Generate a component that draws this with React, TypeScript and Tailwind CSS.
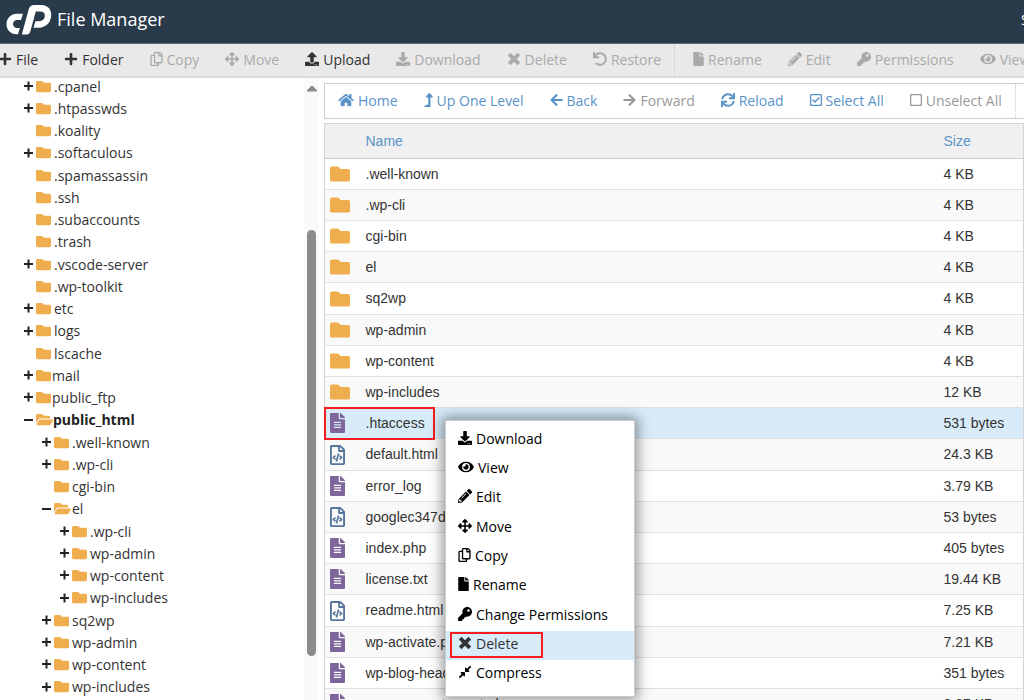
import type { ReactNode } from "react";
import {
  FaArrowLeft,
  FaArrowRight,
  FaArrowsAlt,
  FaCaretUp,
  FaCompressAlt,
  FaDownload,
  FaEye,
  FaFile,
  FaFileAlt,
  FaFolder,
  FaFolderOpen,
  FaHome,
  FaKey,
  FaLevelUpAlt,
  FaPencilAlt,
  FaPlus,
  FaRegCheckSquare,
  FaRegCopy,
  FaRegFileCode,
  FaRegSquare,
  FaSync,
  FaUndo,
  FaUpload,
} from "react-icons/fa";

type Icon = (props: { className?: string }) => ReactNode;
// w: icon width, only for glyphs that are not square
type Action = { label: string; icon: Icon; w?: string; off?: boolean; sep?: boolean };

function Cross({ className }: { className?: string }) {
  return (
    <svg viewBox="0 0 14 14" className={className} stroke="currentColor" strokeWidth="3.8">
      <path d="M2.200 2.200L11.800 11.800M11.800 2.200L2.200 11.800" />
    </svg>
  );
}

const toolbar: Action[] = [
  { label: "File", icon: FaPlus },
  { label: "Folder", icon: FaPlus },
  { label: "Copy", icon: FaRegCopy, w: "w-[13px]", off: true },
  { label: "Move", icon: FaArrowsAlt, off: true },
  { label: "Upload", icon: FaUpload },
  { label: "Download", icon: FaDownload, off: true },
  { label: "Delete", icon: Cross, off: true },
  { label: "Restore", icon: FaUndo, off: true, sep: true },
  { label: "Rename", icon: FaFile, w: "w-[11px]", off: true },
  { label: "Edit", icon: FaPencilAlt, off: true },
  { label: "Permissions", icon: FaKey, off: true },
  { label: "View", icon: FaEye, w: "w-4", off: true },
];

const navActions: Action[] = [
  { label: "Home", icon: FaHome, w: "w-4" },
  { label: "Up One Level", icon: FaLevelUpAlt, w: "w-[9px]" },
  { label: "Back", icon: FaArrowLeft, w: "w-[13px]" },
  { label: "Forward", icon: FaArrowRight, w: "w-[13px]", off: true },
  { label: "Reload", icon: FaSync },
  { label: "Select All", icon: FaRegCheckSquare, w: "w-3" },
  { label: "Unselect All", icon: FaRegSquare, w: "w-3", off: true, sep: true },
];

const menu: Action[] = [
  { label: "Download", icon: FaDownload },
  { label: "View", icon: FaEye, w: "w-4" },
  { label: "Edit", icon: FaPencilAlt },
  { label: "Move", icon: FaArrowsAlt },
  { label: "Copy", icon: FaRegCopy, w: "w-[13px]" },
  { label: "Rename", icon: FaFile, w: "w-[11px]" },
  { label: "Change Permissions", icon: FaKey },
  { label: "Delete", icon: Cross },
  { label: "Compress", icon: FaCompressAlt },
];

// [name, depth, state]: "+" collapsed, "-" expanded, "" no children
const tree: [string, number, "+" | "-" | ""][] = [
  [".cpanel", 0, "+"],
  [".htpasswds", 0, "+"],
  [".koality", 0, ""],
  [".softaculous", 0, "+"],
  [".spamassassin", 0, ""],
  [".ssh", 0, ""],
  [".subaccounts", 0, ""],
  [".trash", 0, ""],
  [".vscode-server", 0, "+"],
  [".wp-toolkit", 0, ""],
  ["etc", 0, "+"],
  ["logs", 0, "+"],
  ["lscache", 0, ""],
  ["mail", 0, "+"],
  ["public_ftp", 0, "+"],
  ["public_html", 0, "-"],
  [".well-known", 1, "+"],
  [".wp-cli", 1, "+"],
  ["cgi-bin", 1, ""],
  ["el", 1, "-"],
  [".wp-cli", 2, "+"],
  ["wp-admin", 2, "+"],
  ["wp-content", 2, "+"],
  ["wp-includes", 2, "+"],
  ["sq2wp", 1, "+"],
  ["wp-admin", 1, "+"],
  ["wp-content", 1, "+"],
  ["wp-includes", 1, "+"],
];

const indent = ["pl-6", "pl-[42px]", "pl-[60px]"];

const labelStyle: Record<string, string> = {
  mail: "ml-px",
  public_ftp: "ml-px",
  public_html: "font-bold text-[#222]",
  el: "ml-px",
};

const files: [string, string, "dir" | "text" | "code"][] = [
  [".well-known", "4 KB", "dir"],
  [".wp-cli", "4 KB", "dir"],
  ["cgi-bin", "4 KB", "dir"],
  ["el", "4 KB", "dir"],
  ["sq2wp", "4 KB", "dir"],
  ["wp-admin", "4 KB", "dir"],
  ["wp-content", "4 KB", "dir"],
  ["wp-includes", "12 KB", "dir"],
  [".htaccess", "531 bytes", "text"],
  ["default.html", "24.3 KB", "code"],
  ["error_log", "3.79 KB", "text"],
  ["googlec347d5a1.html", "53 bytes", "code"],
  ["index.php", "405 bytes", "text"],
  ["license.txt", "19.44 KB", "text"],
  ["readme.html", "7.25 KB", "code"],
  ["wp-activate.php", "7.21 KB", "text"],
  ["wp-blog-header.php", "351 bytes", "text"],
  ["wp-comments-post.php", "2.27 KB", "text"],
];

const fileIcons: Record<string, ReactNode> = {
  dir: <FaFolder className="size-5 text-[#f0ad4e]" />,
  text: <FaFileAlt className="h-5 w-[15px] text-[#7e659c]" />,
  code: <FaRegFileCode className="h-5 w-[15px] text-[#55759b]" />,
};

function Logo() {
  return (
    <svg viewBox="0 0 46 31" className="h-[31px] w-[46px]" fill="#fff" aria-label="cPanel">
      <path d="M17 9.800L15 16H11.300C8.600 16 7 17.700 7 20C7 22.300 8.600 24 11 24H13.800L12 30.200H10.500C4.500 30.200 0.500 26 0.500 20.300C0.500 14.300 5 9.800 11 9.800Z" />
      <path d="M15.800 30.500L22.600 5.500C23.400 2.600 25.300 1 28 1H35.500C42 1 46 6 45.200 12.500C44.400 19 39.500 23.700 33 23.700H27.500L29.300 17.200H33C36.500 17.200 38.500 15 38.800 12.300C39.100 9.500 37.500 7.500 34.500 7.500H29.800L24.300 27.600C23.700 29.600 22.500 30.500 20.800 30.500Z" />
    </svg>
  );
}

function Toggle({ state }: { state: "+" | "-" | "" }) {
  return (
    <svg viewBox="0 0 10 10" className="size-[10px] shrink-0" stroke="#222" strokeWidth="2">
      {state && <path d="M0 5H9" />}
      {state === "+" && <path d="M4.500 0.500V9.500" />}
    </svg>
  );
}

function Sidebar() {
  return (
    <aside className="flex w-[319px] shrink-0 overflow-hidden">
      <ul className="-mt-[3px] flex-1">
        {tree.map(([name, depth, state], i) => (
          <li key={i} className={`flex h-[22px] items-center nth-[4n]:h-[23px] ${indent[depth]}`}>
            <Toggle state={state} />
            {state === "-" ? (
              <FaFolderOpen className="ml-[2px] h-[15px] w-[17px] shrink-0 text-[#f0ad4e]" />
            ) : (
              <FaFolder className="ml-[2px] size-[15px] shrink-0 text-[#f0ad4e]" />
            )}
            <a href="#" className={labelStyle[name] ?? "ml-[3px]"}>
              {name}
            </a>
          </li>
        ))}
      </ul>
      <div className="flex w-[15px] flex-col items-center bg-[#fafafa] pt-px">
        <FaCaretUp className="size-[18px] text-[#8b8b8b]" />
        <div className="mt-[133px] h-[426px] w-[9px] rounded-full bg-[#8b8b8b]" />
      </div>
    </aside>
  );
}

function FileTable() {
  return (
    <table className="mt-1 w-full table-fixed border border-[#d4d4d4] text-left font-['Liberation_Sans',Arial,sans-serif]">
      <thead>
        <tr className="h-[35px] border-b border-[#ccc] bg-[#f0f0f0] text-[#5b93c8]">
          <th className="w-[41px]" aria-label="Type" />
          <th className="font-normal">Name</th>
          <th className="w-20 font-normal">Size</th>
        </tr>
      </thead>
      <tbody>
        {files.map(([name, size, kind]) => {
          const selected = name === ".htaccess";
          return (
            <tr
              key={name}
              className={`h-[31px] border-b border-[#e0e0e0] nth-[5n]:h-8 ${selected ? "bg-[#d7ebf8]" : "even:bg-[#f9f9f9]"}`}
            >
              <td className="relative pl-[5px]">
                {fileIcons[kind]}
                {selected && <span className="absolute -top-px -left-px h-[33px] w-[111px] border-2 border-[#f51d20]" />}
              </td>
              <td className="whitespace-nowrap">{name}</td>
              <td className="whitespace-nowrap">{size}</td>
            </tr>
          );
        })}
      </tbody>
    </table>
  );
}

function ContextMenu() {
  return (
    <ul className="absolute top-[420px] left-[445px] w-[190px] border border-[#ccc] bg-white pt-[5px] pb-[6px] text-black shadow-[0_0_12px_3px_rgba(0,0,0,0.4)]">
      {menu.map(({ label, icon: Icon, w = "w-[14px]" }) => (
        <li key={label} className="h-[29px] nth-[3n]:h-[30px]">
          <button
            className={`relative flex h-[29px] w-full items-center gap-1 pb-[5px] pl-3 ${label === "Delete" ? "bg-[#d7ebf8] text-[#333]" : ""}`}
          >
            <Icon className={`h-[14px] shrink-0 ${w}`} />
            {label}
            {label === "Delete" && <span className="absolute top-px left-1 h-[26px] w-[93px] border-2 border-[#f51d20]" />}
          </button>
        </li>
      ))}
    </ul>
  );
}

export default function App() {
  return (
    <div className="relative flex h-screen flex-col overflow-hidden bg-white font-['Open_Sans','Noto_Sans',sans-serif] text-[14px] text-[#333]">
      <header className="flex h-11 shrink-0 items-center border-b border-[#5d6b7a] bg-[#293a4a] pb-[5px] pl-1.5 text-white">
        <Logo />
        <h1 className="ml-[5px] text-[18px]">File Manager</h1>
        <span className="ml-auto w-[3px] overflow-hidden">Search</span>
      </header>

      <nav className="flex h-[34px] shrink-0 overflow-hidden border-b-2 border-[#dcdcdc] bg-[#e9e9e9]">
        {toolbar.map(({ label, icon: Icon, w = "w-[14px]", off, sep }) => (
          <button
            key={label}
            disabled={off}
            className={`flex shrink-0 items-center gap-1 px-[13px] pb-[2px] first:-ml-[2px] first:pl-0 ${off ? "text-[#aaa]" : ""} ${sep ? "mr-[5px] border-r border-dotted border-[#ccc]" : ""}`}
          >
            <Icon className={`h-[14px] shrink-0 ${w}`} />
            {label}
          </button>
        ))}
      </nav>

      <div className="flex min-h-0 flex-1 overflow-hidden">
        <Sidebar />
        <main className="ml-[5px] min-w-0 flex-1 pt-[5px]">
          <div className="flex h-9 overflow-hidden border border-r-0 border-[#ccc]">
            {navActions.map(({ label, icon: Icon, w = "w-[14px]", off, sep }) => (
              <button
                key={label}
                disabled={off}
                className={`flex shrink-0 items-center gap-1 px-[13px] pb-[2px] ${off ? "text-[#999]" : "text-[#5b93c8]"} ${sep ? "border-r border-dotted border-[#ccc]" : ""}`}
              >
                <Icon className={`h-[14px] shrink-0 ${w}`} />
                {label}
              </button>
            ))}
          </div>
          <FileTable />
        </main>
      </div>

      <ContextMenu />
    </div>
  );
}
